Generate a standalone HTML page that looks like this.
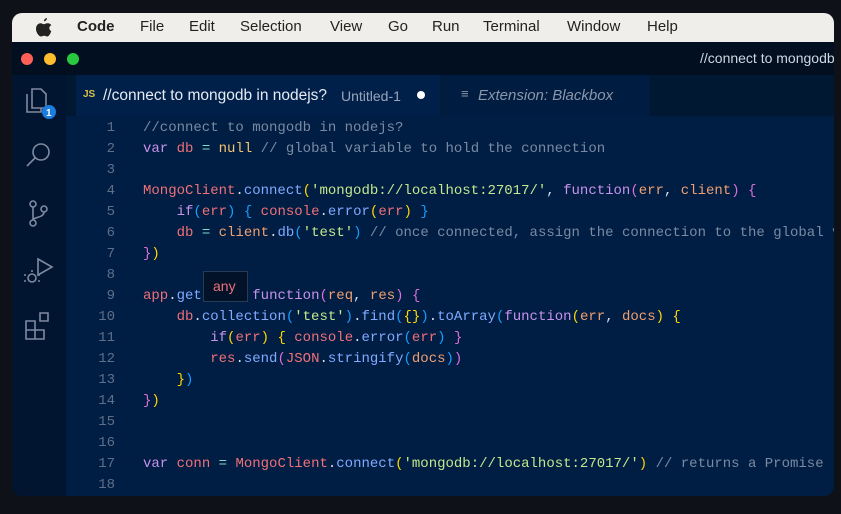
<!DOCTYPE html>
<html><head><style>
*{margin:0;padding:0;box-sizing:border-box}
body{width:841px;height:514px;background:#0e1117;position:relative;overflow:hidden;font-family:"Liberation Sans",sans-serif}
.win{position:absolute;left:12px;top:13px;width:822px;height:483px;border-radius:10px;overflow:hidden;background:#001d44}
.menu{position:absolute;left:0;top:0;width:822px;height:29px;background:#efeeea;color:#222;font-size:15px}
.menu span{position:absolute;top:5px}
.title{position:absolute;left:0;top:29px;width:822px;height:33px;background:#020f20}
.dot{position:absolute;top:11px;width:12px;height:12px;border-radius:50%}
.act{position:absolute;left:0;top:62px;width:54px;height:421px;background:#011530}
.tabs{position:absolute;left:54px;top:62px;width:768px;height:41px;background:#011833}
.tab1{position:absolute;left:10px;top:0;width:364px;height:41px;background:#00204a}
.tab2{position:absolute;left:374px;top:0;width:210px;height:41px;background:#001c40;border-left:1px solid #0a1a30}
.code{position:absolute;left:54px;top:103px;width:768px;height:380px;background:#001d44;font-family:"Liberation Mono",monospace;font-size:14px}
.ln{position:absolute;left:0;width:49px;text-align:right;color:#5f6f88}
.l{position:absolute;left:77px;white-space:pre;color:#d6deeb}
.k{color:#c792ea}.v{color:#f07178}.c{color:#7a8aa2}.n{color:#f7c56f}.s{color:#c3e88d}.f{color:#82aaff}.y{color:#ffd700}.b{color:#179fff}.p{color:#da70d6}.t{color:#7fdbca}.o{color:#f0a070}.w{color:#d6deeb}
</style></head><body>
<div class="win">
<div class="menu">
<svg style="position:absolute;left:24px;top:5px" width="16" height="19" viewBox="0 0 16 19"><path fill="#222" d="M11 0c0 1.6-1.3 3.3-3 3.3C7.9 1.6 9.3.2 11 0zM13.3 10c0 2.2 1.9 3 2 3-.6 1.9-2.2 5.5-4 5.5-1.3 0-1.6-.8-3.1-.8s-1.9.8-3.1.8C3 18.5 0 14.800 0 10.900 0 7.400 2.300 5.300 4.500 5.300c1.400 0 2.400.9 3.300.9.800 0 2.100-1 3.700-1 .600 0 2.600.100 3.800 1.900-.100.1-2 1.200-2 2.900z"/></svg>
<span style="left:65px;font-weight:bold">Code</span>
<span style="left:128px">File</span>
<span style="left:177px">Edit</span>
<span style="left:228px">Selection</span>
<span style="left:318px">View</span>
<span style="left:376px">Go</span>
<span style="left:420px">Run</span>
<span style="left:471px">Terminal</span>
<span style="left:555px">Window</span>
<span style="left:635px">Help</span>
</div>
<div class="title">
<div class="dot" style="left:9px;background:#fe5f57"></div>
<div class="dot" style="left:32px;background:#febc2e"></div>
<div class="dot" style="left:55px;background:#28c840"></div>
<span style="position:absolute;left:688px;top:8px;color:#cfd6e0;font-size:14px;white-space:nowrap">//connect to mongodb</span>
</div>
<div class="act">
<svg width="54" height="280" viewBox="0 0 54 280" fill="none" stroke="#7f8aa0" stroke-width="1.6">
<path d="M20 14h9l5 5v14h-14z M15 19v18h14v-4"/>
<circle cx="37" cy="37" r="7" fill="#1a7de0" stroke="none"/>
<text x="34" y="41" fill="#fff" stroke="none" font-size="10" font-weight="bold" font-family="Liberation Sans">1</text>
<circle cx="29" cy="77" r="8"/><path d="M23 83l-8 8"/>
<circle cx="21" cy="129" r="3"/><circle cx="21" cy="148" r="3"/><circle cx="32" cy="134" r="3"/><path d="M21 132v13M32 137c0 6-11 5-11 8"/>
<path d="M26 184l14 8-14 8z"/><circle cx="20" cy="203" r="4"/><path d="M14 200h-2M14 206h-2M26 200h2M26 206h2M20 197v-2"/>
<path d="M14 246h9v9h-9zM14 255h9v9h-9zM23 255h9v9h-9zM28 238h8v8h-8z"/>
</svg>
</div>
<div class="tabs">
<div class="tab1">
<span style="position:absolute;left:7px;top:14px;color:#d8c04a;font-size:10px;font-weight:bold">JS</span>
<span style="position:absolute;left:27px;top:12px;color:#e6ebf2;font-size:15.5px">//connect to mongodb in nodejs?</span>
<span style="position:absolute;left:265px;top:13px;color:#9aa6b8;font-size:14px">Untitled-1</span>
<span style="position:absolute;left:341px;top:16px;width:8px;height:8px;border-radius:50%;background:#fff"></span>
</div>
<div class="tab2">
<span style="position:absolute;left:20px;top:11px;color:#8a96aa;font-size:13px">&#8801;</span>
<span style="position:absolute;left:37px;top:12px;color:#8a96aa;font-size:15px;font-style:italic">Extension: Blackbox</span>
</div>
</div>
<div class="code">
<div class="ln" style="top:4px">1</div><div class="l c" style="top:4px">//connect to mongodb in nodejs?</div>
<div class="ln" style="top:25px">2</div><div class="l" style="top:25px"><span class="k">var</span> <span class="v">db</span> <span class="t">=</span> <span class="n">null</span> <span class="c">// global variable to hold the connection</span></div>
<div class="ln" style="top:46px">3</div>
<div class="ln" style="top:67px">4</div><div class="l" style="top:67px"><span class="v">MongoClient</span>.<span class="f">connect</span><span class="y">(</span><span class="s">'mongodb://localhost:27017/'</span>, <span class="k">function</span><span class="p">(</span><span class="o">err</span>, <span class="o">client</span><span class="p">)</span> <span class="p">{</span></div>
<div class="ln" style="top:88px">5</div><div class="l" style="top:88px">    <span class="k">if</span><span class="b">(</span><span class="v">err</span><span class="b">)</span> <span class="b">{</span> <span class="v">console</span>.<span class="f">error</span><span class="y">(</span><span class="v">err</span><span class="y">)</span> <span class="b">}</span></div>
<div class="ln" style="top:109px">6</div><div class="l" style="top:109px">    <span class="v">db</span> <span class="t">=</span> <span class="o">client</span>.<span class="f">db</span><span class="b">(</span><span class="s">'test'</span><span class="b">)</span> <span class="c">// once connected, assign the connection to the global v</span></div>
<div class="ln" style="top:130px">7</div><div class="l" style="top:130px"><span class="p">}</span><span class="y">)</span></div>
<div class="ln" style="top:151px">8</div>
<div class="ln" style="top:172px">9</div><div class="l" style="top:172px"><span class="v">app</span>.<span class="f">get</span>      <span class="k">function</span><span class="p">(</span><span class="o">req</span>, <span class="o">res</span><span class="p">)</span> <span class="p">{</span></div>
<div class="ln" style="top:193px">10</div><div class="l" style="top:193px">    <span class="v">db</span>.<span class="f">collection</span><span class="b">(</span><span class="s">'test'</span><span class="b">)</span>.<span class="f">find</span><span class="b">(</span><span class="y">{}</span><span class="b">)</span>.<span class="f">toArray</span><span class="b">(</span><span class="k">function</span><span class="y">(</span><span class="o">err</span>, <span class="o">docs</span><span class="y">)</span> <span class="y">{</span></div>
<div class="ln" style="top:214px">11</div><div class="l" style="top:214px">        <span class="k">if</span><span class="y">(</span><span class="v">err</span><span class="y">)</span> <span class="y">{</span> <span class="v">console</span>.<span class="f">error</span><span class="b">(</span><span class="v">err</span><span class="b">)</span> <span class="p">}</span></div>
<div class="ln" style="top:235px">12</div><div class="l" style="top:235px">        <span class="v">res</span>.<span class="f">send</span><span class="p">(</span><span class="v">JSON</span>.<span class="f">stringify</span><span class="b">(</span><span class="o">docs</span><span class="b">)</span><span class="p">)</span></div>
<div class="ln" style="top:256px">13</div><div class="l" style="top:256px">    <span class="y">}</span><span class="b">)</span></div>
<div class="ln" style="top:277px">14</div><div class="l" style="top:277px"><span class="p">}</span><span class="y">)</span></div>
<div class="ln" style="top:298px">15</div>
<div class="ln" style="top:319px">16</div>
<div class="ln" style="top:340px">17</div><div class="l" style="top:340px"><span class="k">var</span> <span class="v">conn</span> <span class="t">=</span> <span class="v">MongoClient</span>.<span class="f">connect</span><span class="y">(</span><span class="s">'mongodb://localhost:27017/'</span><span class="y">)</span> <span class="c">// returns a Promise</span></div>
<div class="ln" style="top:361px">18</div>
<div style="position:absolute;left:137px;top:155px;width:45px;height:31px;background:#011229;border:1px solid #2a3a55"></div>
<div style="position:absolute;left:147px;top:162px;color:#f07178;font-family:'Liberation Sans',sans-serif;font-size:14px">any</div>
</div>
</div>
</body></html>
